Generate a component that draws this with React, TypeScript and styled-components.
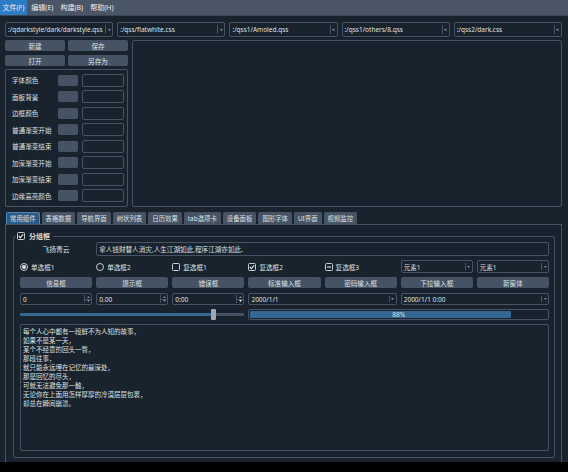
import React from 'react';
import styled, { createGlobalStyle } from 'styled-components';

const GlobalStyle = createGlobalStyle`
  html, body {
    margin: 0;
    padding: 0;
    background: #000;
  }
  body {
    font-family: "Noto Sans", "Noto Sans CJK SC", sans-serif;
  }
  * {
    box-sizing: border-box;
  }
`;

const Screen = styled.div`
  width: 568px;
  height: 472px;
  background: #000;
  overflow: hidden;
`;

const Window = styled.div`
  height: 462px;
  background: #19232d;
  color: #dfe1e2;
  font-size: 7px;
  display: flex;
  flex-direction: column;
`;

const MenuBar = styled.div`
  height: 16px;
  background: #4a5668;
  border-bottom: 1px solid #3c4756;
  display: flex;
  gap: 2px;
`;

const MenuItem = styled.div<{ $active?: boolean }>`
  padding: 0 2.5px;
  line-height: 15px;
  font-size: 7px;
  color: #eceef0;
  background: ${p => (p.$active ? '#2d7cc6' : 'transparent')};
`;

const Body = styled.div`
  flex: 1;
  display: flex;
  flex-direction: column;
  padding: 6px 6px 0 5px;
  min-height: 0;
`;

const ComboRow = styled.div`
  display: grid;
  grid-template-columns: repeat(5, 1fr);
  gap: 4px;
  height: 15px;
`;

const ComboBox = styled.div<{ $span?: number }>`
  grid-column: span ${p => p.$span ?? 1};
  display: flex;
  align-items: center;
  border: 1px solid #455364;
  border-radius: 2px;
  background: #19232d;
  min-width: 0;
`;

const ComboText = styled.span`
  flex: 1;
  padding-left: 2px;
  white-space: nowrap;
  font-size: 6.5px;
`;

const ComboArrow = styled.span`
  width: 7px;
  flex-shrink: 0;
  height: calc(100% - 4px);
  border-left: 1px solid #455364;
  display: flex;
  align-items: center;
  justify-content: center;
`;

const Middle = styled.div`
  display: flex;
  gap: 4px;
  margin-top: 3px;
  height: 167px;
`;

const LeftPanel = styled.div`
  width: 123px;
  display: flex;
  flex-direction: column;
`;

const ButtonGrid = styled.div`
  display: grid;
  grid-template-columns: 1fr 1fr;
  column-gap: 3px;
  row-gap: 4px;
`;

const Button = styled.div`
  height: 11px;
  background: #455364;
  border-radius: 2px;
  display: flex;
  align-items: center;
  justify-content: center;
  font-size: 6.6px;
  color: #dfe1e2;
`;

const ColorFrame = styled.div`
  flex: 1;
  margin-top: 3px;
  border: 1px solid #455364;
  border-radius: 2px;
  padding: 2px 3px 2px 6px;
  display: flex;
  flex-direction: column;
`;

const ColorRow = styled.div`
  flex: 1;
  display: flex;
  align-items: center;
`;

const ColorLabel = styled.span`
  width: 46px;
  font-size: 6.6px;
  white-space: nowrap;
`;

const Swatch = styled.span`
  width: 20px;
  height: 11px;
  background: #455364;
  border-radius: 2px;
`;

const ColorValue = styled.span`
  margin-left: 4px;
  width: 42px;
  height: 13px;
  border: 1px solid #455364;
  border-radius: 2px;
`;

const PreviewPanel = styled.div`
  flex: 1;
  border: 1px solid #455364;
  border-radius: 2px;
`;

const TabBar = styled.div`
  display: flex;
  gap: 2px;
  margin-top: 4px;
  padding-left: 1px;
  height: 13px;
`;

const Tab = styled.div<{ $active?: boolean }>`
  height: 12px;
  margin-top: 1px;
  padding: 0 3px;
  display: flex;
  align-items: center;
  font-size: 6.4px;
  white-space: nowrap;
  border-radius: 2px 2px 0 0;
  background: ${p => (p.$active ? '#2e5b85' : '#455364')};
  border: 1px solid ${p => (p.$active ? '#4f86b8' : '#455364')};
  border-bottom: none;
  color: #dfe1e2;
`;

const Pane = styled.div`
  flex: 1;
  border: 1px solid #455364;
  border-bottom: none;
  padding: 6px 6px 4px 7px;
  display: flex;
  min-height: 0;
`;

const GroupBox = styled.fieldset`
  flex: 1;
  margin: 0;
  min-width: 0;
  border: 1px solid #455364;
  border-radius: 2px;
  padding: 1px 5px 6px 6px;
  display: grid;
  grid-template-columns: repeat(7, 1fr);
  grid-template-rows: 14px 13px 12px 12px 11px 1fr;
  column-gap: 4px;
  row-gap: 4px;
`;

const Legend = styled.legend`
  margin-left: -4px;
  padding: 0 3px 0 1px;
  display: flex;
  align-items: center;
  gap: 4px;
  height: 10px;
  font-size: 7px;
  font-weight: bold;
`;

const FieldLabel = styled.div`
  display: flex;
  align-items: center;
  justify-content: center;
  font-size: 6.8px;
`;

const LineEdit = styled.div<{ $span: number }>`
  grid-column: span ${p => p.$span};
  border: 1px solid #455364;
  border-radius: 2px;
  display: flex;
  align-items: center;
  padding-left: 2px;
  font-size: 6.6px;
  white-space: nowrap;
`;

const Choice = styled.div`
  display: flex;
  align-items: center;
  gap: 3px;
  font-size: 6.6px;
  white-space: nowrap;
`;

const SpinBox = styled.div`
  border: 1px solid #455364;
  border-radius: 2px;
  display: flex;
  align-items: stretch;
`;

const SpinText = styled.span`
  flex: 1;
  padding-left: 2px;
  display: flex;
  align-items: center;
  font-size: 6.6px;
`;

const SpinButtons = styled.span`
  width: 7px;
  margin: 1px 0;
  border-left: 1px solid #455364;
  display: flex;
  flex-direction: column;
`;

const SpinHalf = styled.span<{ $bottom?: boolean }>`
  flex: 1;
  display: flex;
  align-items: center;
  justify-content: center;
  border-top: ${p => (p.$bottom ? '1px solid #455364' : 'none')};
`;

const SliderBox = styled.div`
  grid-column: span 3;
  display: flex;
  align-items: center;
`;

const Groove = styled.div`
  position: relative;
  flex: 1;
  height: 3px;
  background: #455364;
  border-radius: 1px;
`;

const GrooveFill = styled.div`
  height: 100%;
  background: #346792;
  border-radius: 1px;
`;

const Handle = styled.div`
  position: absolute;
  top: -4px;
  width: 5px;
  height: 11px;
  margin-left: -3px;
  background: #9da9b5;
  border-radius: 1px;
`;

const Progress = styled.div`
  position: relative;
  grid-column: span 4;
  border: 1px solid #455364;
  border-radius: 2px;
  padding: 1px;
  display: flex;
`;

const ProgressFill = styled.div`
  height: 100%;
  background: #346792;
  border-radius: 1px;
`;

const ProgressText = styled.span`
  position: absolute;
  inset: 0;
  display: flex;
  align-items: center;
  justify-content: center;
  font-size: 6.6px;
`;

const TextEdit = styled.div`
  grid-column: 1 / -1;
  border: 1px solid #455364;
  border-radius: 2px;
  padding: 2px 2px;
  font-size: 6.5px;
  line-height: 9px;
  white-space: pre;
`;

const DownArrow = ({ color = '#7d8a97' }: { color?: string }) => (
  <svg width="3" height="2" viewBox="0 0 3 2">
    <path d="M0 0 L3 0 L1.5 2 Z" fill={color} />
  </svg>
);

const UpArrow = ({ color = '#7d8a97' }: { color?: string }) => (
  <svg width="3" height="2" viewBox="0 0 3 2">
    <path d="M0 2 L3 2 L1.5 0 Z" fill={color} />
  </svg>
);

const CheckBox = ({ state }: { state: 'on' | 'off' | 'partial' }) => (
  <svg width="8" height="8" viewBox="0 0 8 8">
    <rect x="0.5" y="0.5" width="7" height="7" rx="1" fill="#19232d" stroke="#c8cdd2" />
    {state === 'on' && <path d="M1.8 4 L3.3 5.6 L6.2 2.3" fill="none" stroke="#e6e8ea" strokeWidth="1.1" />}
    {state === 'partial' && <path d="M2 4 H6" stroke="#e6e8ea" strokeWidth="1.1" />}
  </svg>
);

const Radio = ({ checked }: { checked?: boolean }) => (
  <svg width="8" height="8" viewBox="0 0 8 8">
    <circle cx="4" cy="4" r="3.5" fill="#19232d" stroke="#c8cdd2" />
    {checked && <circle cx="4" cy="4" r="2" fill="#e6e8ea" />}
  </svg>
);

const Combo = ({ text, span }: { text: string; span?: number }) => (
  <ComboBox $span={span}>
    <ComboText>{text}</ComboText>
    <ComboArrow>
      <DownArrow />
    </ComboArrow>
  </ComboBox>
);

const Spin = ({ text, active }: { text: string; active?: boolean }) => (
  <SpinBox>
    <SpinText>{text}</SpinText>
    <SpinButtons>
      <SpinHalf>
        <UpArrow />
      </SpinHalf>
      <SpinHalf $bottom>
        <DownArrow color={active ? '#f2f3f4' : '#7d8a97'} />
      </SpinHalf>
    </SpinButtons>
  </SpinBox>
);

const styleFiles = [
  ':/qdarkstyle/dark/darkstyle.qss',
  ':/qss/flatwhite.css',
  ':/qss1/Amoled.qss',
  ':/qss1/others/8.qss',
  ':/qss2/dark.css',
];

const colorLabels = ['字体颜色', '面板背景', '边框颜色', '普通渐变开始', '普通渐变结束', '加深渐变开始', '加深渐变结束', '边缘高亮颜色'];

const tabs = ['常用组件', '表格数据', '导航界面', '树状列表', '日历效果', 'tab选项卡', '设备面板', '图形字体', 'UI界面', '视频监控'];

const actions = ['信息框', '提示框', '错误框', '标准输入框', '密码输入框', '下拉输入框', '新窗体'];

const story = [
  '每个人心中都有一段鲜不为人知的故事，',
  '如果不是某一天，',
  '某个不经意的回头一瞥，',
  '那段往事，',
  '就只能永远埋在记忆的最深处，',
  '那是回忆的尽头，',
  '可就无法避免那一触，',
  '无论你在上面用怎样厚厚的冷漠层层包裹，',
  '却总在瞬间崩溃。',
].join('\n');

const sliderValue = 0.866;
const progressValue = 88;

export default function App() {
  return (
    <Screen>
      <GlobalStyle />
      <Window>
        <MenuBar>
          <MenuItem $active>文件(F)</MenuItem>
          <MenuItem>编辑(E)</MenuItem>
          <MenuItem>构建(B)</MenuItem>
          <MenuItem>帮助(H)</MenuItem>
        </MenuBar>
        <Body>
          <ComboRow>
            {styleFiles.map(f => (
              <Combo key={f} text={f} />
            ))}
          </ComboRow>

          <Middle>
            <LeftPanel>
              <ButtonGrid>
                <Button>新建</Button>
                <Button>保存</Button>
                <Button>打开</Button>
                <Button>另存为</Button>
              </ButtonGrid>
              <ColorFrame>
                {colorLabels.map(l => (
                  <ColorRow key={l}>
                    <ColorLabel>{l}</ColorLabel>
                    <Swatch />
                    <ColorValue />
                  </ColorRow>
                ))}
              </ColorFrame>
            </LeftPanel>
            <PreviewPanel />
          </Middle>

          <TabBar>
            {tabs.map((t, i) => (
              <Tab key={t} $active={i === 0}>
                {t}
              </Tab>
            ))}
          </TabBar>
          <Pane>
            <GroupBox>
              <Legend>
                <CheckBox state="on" />
                <span>分组框</span>
              </Legend>

              <FieldLabel>飞扬青云</FieldLabel>
              <LineEdit $span={6}>拿人钱财替人消灾,人生江湖如此,程序江湖亦如此.</LineEdit>

              <Choice>
                <Radio checked />
                单选框1
              </Choice>
              <Choice>
                <Radio />
                单选框2
              </Choice>
              <Choice>
                <CheckBox state="off" />
                复选框1
              </Choice>
              <Choice>
                <CheckBox state="on" />
                复选框2
              </Choice>
              <Choice>
                <CheckBox state="partial" />
                复选框3
              </Choice>
              <Combo text="元素1" />
              <Combo text="元素1" />

              {actions.map(a => (
                <Button key={a}>{a}</Button>
              ))}

              <Spin text="0" />
              <Spin text="0.00" />
              <Spin text="0:00" active />
              <Combo text="2000/1/1" span={2} />
              <Combo text="2000/1/1 0:00" span={2} />

              <SliderBox>
                <Groove>
                  <GrooveFill style={{ width: `${sliderValue * 100}%` }} />
                  <Handle style={{ left: `${sliderValue * 100}%` }} />
                </Groove>
              </SliderBox>
              <Progress>
                <ProgressFill style={{ width: `${progressValue}%` }} />
                <ProgressText>{progressValue}%</ProgressText>
              </Progress>

              <TextEdit>{story}</TextEdit>
            </GroupBox>
          </Pane>
        </Body>
      </Window>
    </Screen>
  );
}
